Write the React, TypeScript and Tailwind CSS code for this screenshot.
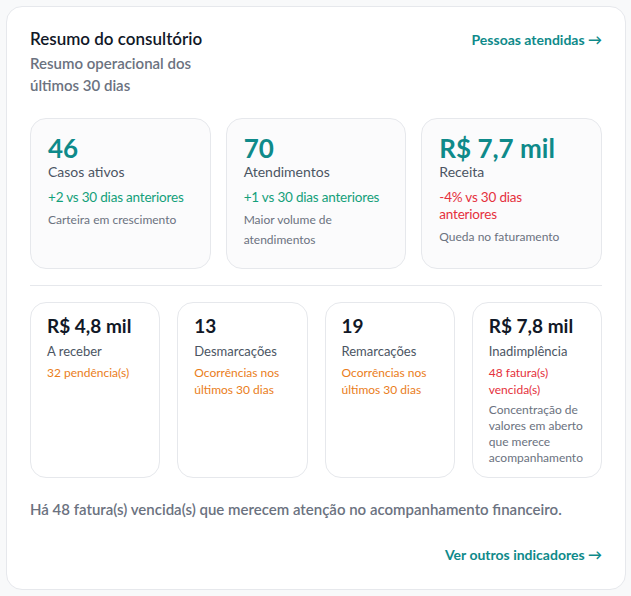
import React from "react";

const font = { fontFamily: 'Lato, "Open Sans", "Liberation Sans", sans-serif' };

interface TopStat {
  value: string;
  label: string;
  change: string;
  tone: "up" | "down";
  note: string;
}

interface SmallStat {
  value: string;
  label: string;
  detail: string;
  tone: "warn" | "danger";
  note?: string;
}

const topStats: TopStat[] = [
  { value: "46", label: "Casos ativos", change: "+2 vs 30 dias anteriores", tone: "up", note: "Carteira em crescimento" },
  { value: "70", label: "Atendimentos", change: "+1 vs 30 dias anteriores", tone: "up", note: "Maior volume de atendimentos" },
  { value: "R$ 7,7 mil", label: "Receita", change: "-4% vs 30 dias\nanteriores", tone: "down", note: "Queda no faturamento" },
];

const smallStats: SmallStat[] = [
  { value: "R$ 4,8 mil", label: "A receber", detail: "32 pendência(s)", tone: "warn" },
  { value: "13", label: "Desmarcações", detail: "Ocorrências nos últimos 30 dias", tone: "warn" },
  { value: "19", label: "Remarcações", detail: "Ocorrências nos últimos 30 dias", tone: "warn" },
  {
    value: "R$ 7,8 mil",
    label: "Inadimplência",
    detail: "48 fatura(s) vencida(s)",
    tone: "danger",
    note: "Concentração de valores em aberto que merece acompanhamento",
  },
];

function TopCard({ stat }: { stat: TopStat }) {
  return (
    <div className="rounded-2xl border border-[#e6e8ec] bg-[#fbfbfc] px-[17px] pt-[15px] pb-[14px] h-[151px]">
      <div className="text-[26px] leading-[29px] font-bold text-[#0e8a8a]">{stat.value}</div>
      <div className="text-[14px] leading-[18px] text-[#4b5563]">{stat.label}</div>
      <div
        className={
          "mt-[8px] whitespace-pre-line text-[13.5px] leading-[17px] tracking-[-0.2px] " +
          (stat.tone === "up" ? "text-[#13a07a]" : "text-[#e5303c]")
        }
      >
        {stat.change}
      </div>
      <div className="mt-[4px] text-[12px] leading-[20px] text-[#6b7280]">{stat.note}</div>
    </div>
  );
}

function SmallCard({ stat }: { stat: SmallStat }) {
  return (
    <div className="rounded-2xl border border-[#e6e8ec] bg-white px-[16px] pt-[11px] pb-[11px]">
      <div className="text-[19px] leading-[24px] font-bold text-[#111827]">{stat.value}</div>
      <div className="mt-[4px] text-[13px] leading-[18px] text-[#4b5563]">{stat.label}</div>
      <div
        className={
          "mt-[4px] text-[12px] leading-[17px] " + (stat.tone === "warn" ? "text-[#ea7d1a]" : "text-[#e5303c]")
        }
      >
        {stat.detail}
      </div>
      {stat.note && <div className="mt-[4px] text-[12px] leading-[16px] text-[#6b7280]">{stat.note}</div>}
    </div>
  );
}

export default function App() {
  return (
    <div className="min-h-screen bg-[#f8f9fa] p-[6px] pr-[5px]" style={font}>
      <div className="rounded-2xl border border-[#e6e8ec] bg-white px-[23px] pt-[20px] pb-[24px]">
        <div className="flex items-start justify-between">
          <div className="w-[190px]">
            <h2 className="text-[17px] leading-[24px] font-semibold text-[#111827]">Resumo do consultório</h2>
            <p className="mt-[1px] text-[15px] leading-[22px] font-semibold text-[#6b7280]">
              Resumo operacional dos últimos 30 dias
            </p>
          </div>
          <a className="pt-[3px] text-[14px] leading-[20px] font-bold text-[#0e8a8a]" href="#">
            Pessoas atendidas →
          </a>
        </div>

        <div className="mt-[22px] grid grid-cols-3 gap-[15px]">
          {topStats.map((s) => (
            <TopCard key={s.label} stat={s} />
          ))}
        </div>

        <div className="my-[16px] h-px bg-[#e6e8ec]" />

        <div className="grid grid-cols-4 gap-[17px]">
          {smallStats.map((s) => (
            <SmallCard key={s.label} stat={s} />
          ))}
        </div>

        <p className="mt-[20px] text-[15px] leading-[22px] font-semibold text-[#6b7280]">
          Há 48 fatura(s) vencida(s) que merecem atenção no acompanhamento financeiro.
        </p>

        <div className="mt-[25px] flex justify-end">
          <a className="text-[14px] leading-[20px] font-bold text-[#0e8a8a]" href="#">
            Ver outros indicadores →
          </a>
        </div>
      </div>
    </div>
  );
}
